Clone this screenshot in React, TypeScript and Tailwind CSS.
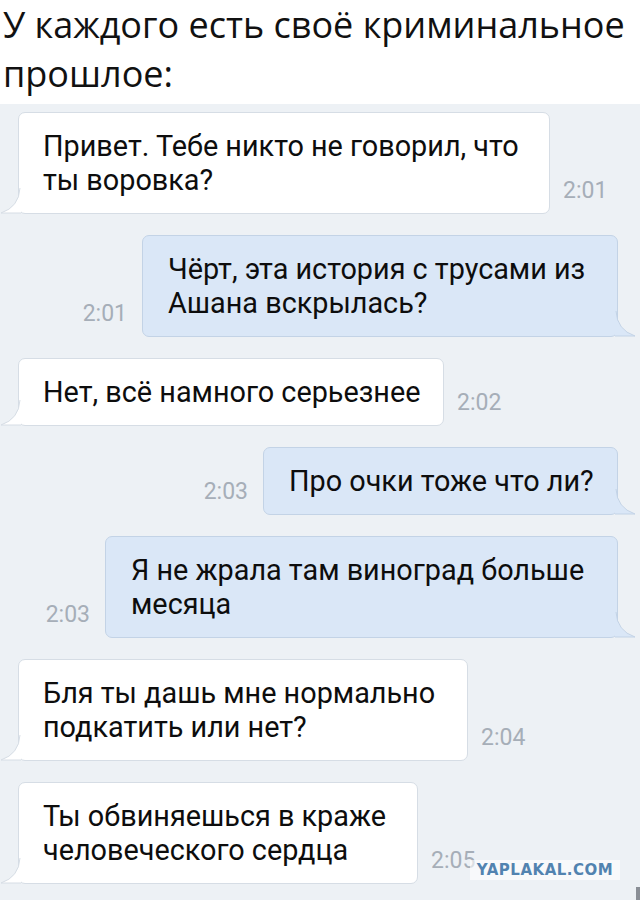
type Msg = {
  side: 'in' | 'out';
  width: string;
  lines: string[];
  time: string;
};

const messages: Msg[] = [
  { side: 'in', width: 'w-[532px]', lines: ['Привет. Тебе никто не говорил, что', 'ты воровка?'], time: '2:01' },
  { side: 'out', width: 'w-[476px]', lines: ['Чёрт, эта история с трусами из', 'Ашана вскрылась?'], time: '2:01' },
  { side: 'in', width: 'w-[426px]', lines: ['Нет, всё намного серьезнее'], time: '2:02' },
  { side: 'out', width: 'w-[355px]', lines: ['Про очки тоже что ли?'], time: '2:03' },
  { side: 'out', width: 'w-[513px]', lines: ['Я не жрала там виноград больше', 'месяца'], time: '2:03' },
  { side: 'in', width: 'w-[450px]', lines: ['Бля ты дашь мне нормально', 'подкатить или нет?'], time: '2:04' },
  { side: 'in', width: 'w-[400px]', lines: ['Ты обвиняешься в краже', 'человеческого сердца'], time: '2:05' },
];

function Tail({ side }: { side: 'in' | 'out' }) {
  if (side === 'in') {
    return (
      <svg className="absolute bottom-[-1px] left-[-19px]" width="21" height="26" viewBox="0 0 21 26">
        <path d="M20 0 Q19 19 1 25 L21 25 L21 0 Z" fill="#ffffff" />
        <path d="M20 0 Q19 19 1 25 L21 25" fill="none" stroke="#d6dde5" strokeWidth="1" />
      </svg>
    );
  }
  return (
    <svg className="absolute bottom-[-1px] right-[-19px]" width="21" height="26" viewBox="0 0 21 26">
      <path d="M1 0 Q2 19 20 25 L0 25 L0 0 Z" fill="#dae7f7" />
      <path d="M1 0 Q2 19 20 25 L0 25" fill="none" stroke="#c3d3e6" strokeWidth="1" />
    </svg>
  );
}

function Time({ value }: { value: string }) {
  return (
    <span className="mb-[10px] font-['Roboto',sans-serif] text-[23px] leading-[26px] text-[#a6aeb8]">
      {value}
    </span>
  );
}

function Bubble({ msg }: { msg: Msg }) {
  const isIn = msg.side === 'in';
  return (
    <div className={isIn ? 'flex items-end gap-[13px] pl-[18px]' : 'flex items-end justify-end gap-[15px] pr-[22px]'}>
      {!isIn && <Time value={msg.time} />}
      <div
        className={
          isIn
            ? `relative ${msg.width} rounded-[7px] border border-[#d6dde5] bg-white py-[16px] pl-[24px] pr-[16px]`
            : `relative ${msg.width} rounded-[7px] border border-[#c3d3e6] bg-[#dae7f7] py-[16px] pl-[25px] pr-[16px]`
        }
      >
        <p className="whitespace-nowrap font-['Roboto',sans-serif] text-[28.8px] leading-[34px] text-[#0d0d0d]">
          {msg.lines.map((l, i) => (
            <span key={i} className="block">
              {l}
            </span>
          ))}
        </p>
        <Tail side={msg.side} />
      </div>
      {isIn && <Time value={msg.time} />}
    </div>
  );
}

export default function App() {
  return (
    <div className="relative h-[900px] w-[640px] overflow-hidden bg-[#edf1f5]">
      <header className="h-[104px] bg-white pl-[3px]">
        <h1 className="font-['Open_Sans',sans-serif] text-[36px] leading-[49px] text-[#111111]">
          У каждого есть своё криминальное
          <br />
          прошлое:
        </h1>
      </header>

      <div className="flex flex-col gap-[21px] pt-[8px]">
        {messages.map((m, i) => (
          <Bubble key={i} msg={m} />
        ))}
      </div>

      <div className="absolute left-[470px] top-[860px] flex h-[20px] w-[150px] items-center justify-center bg-white/60">
        <span className="font-['DejaVu_Sans',sans-serif] text-[15px] font-bold tracking-[0.5px] text-[#5283b0]">
          YAPLAKAL.COM
        </span>
      </div>
      <div className="absolute right-0 top-[887px] h-[13px] w-[4px] bg-[#8a8f96]" />
    </div>
  );
}
